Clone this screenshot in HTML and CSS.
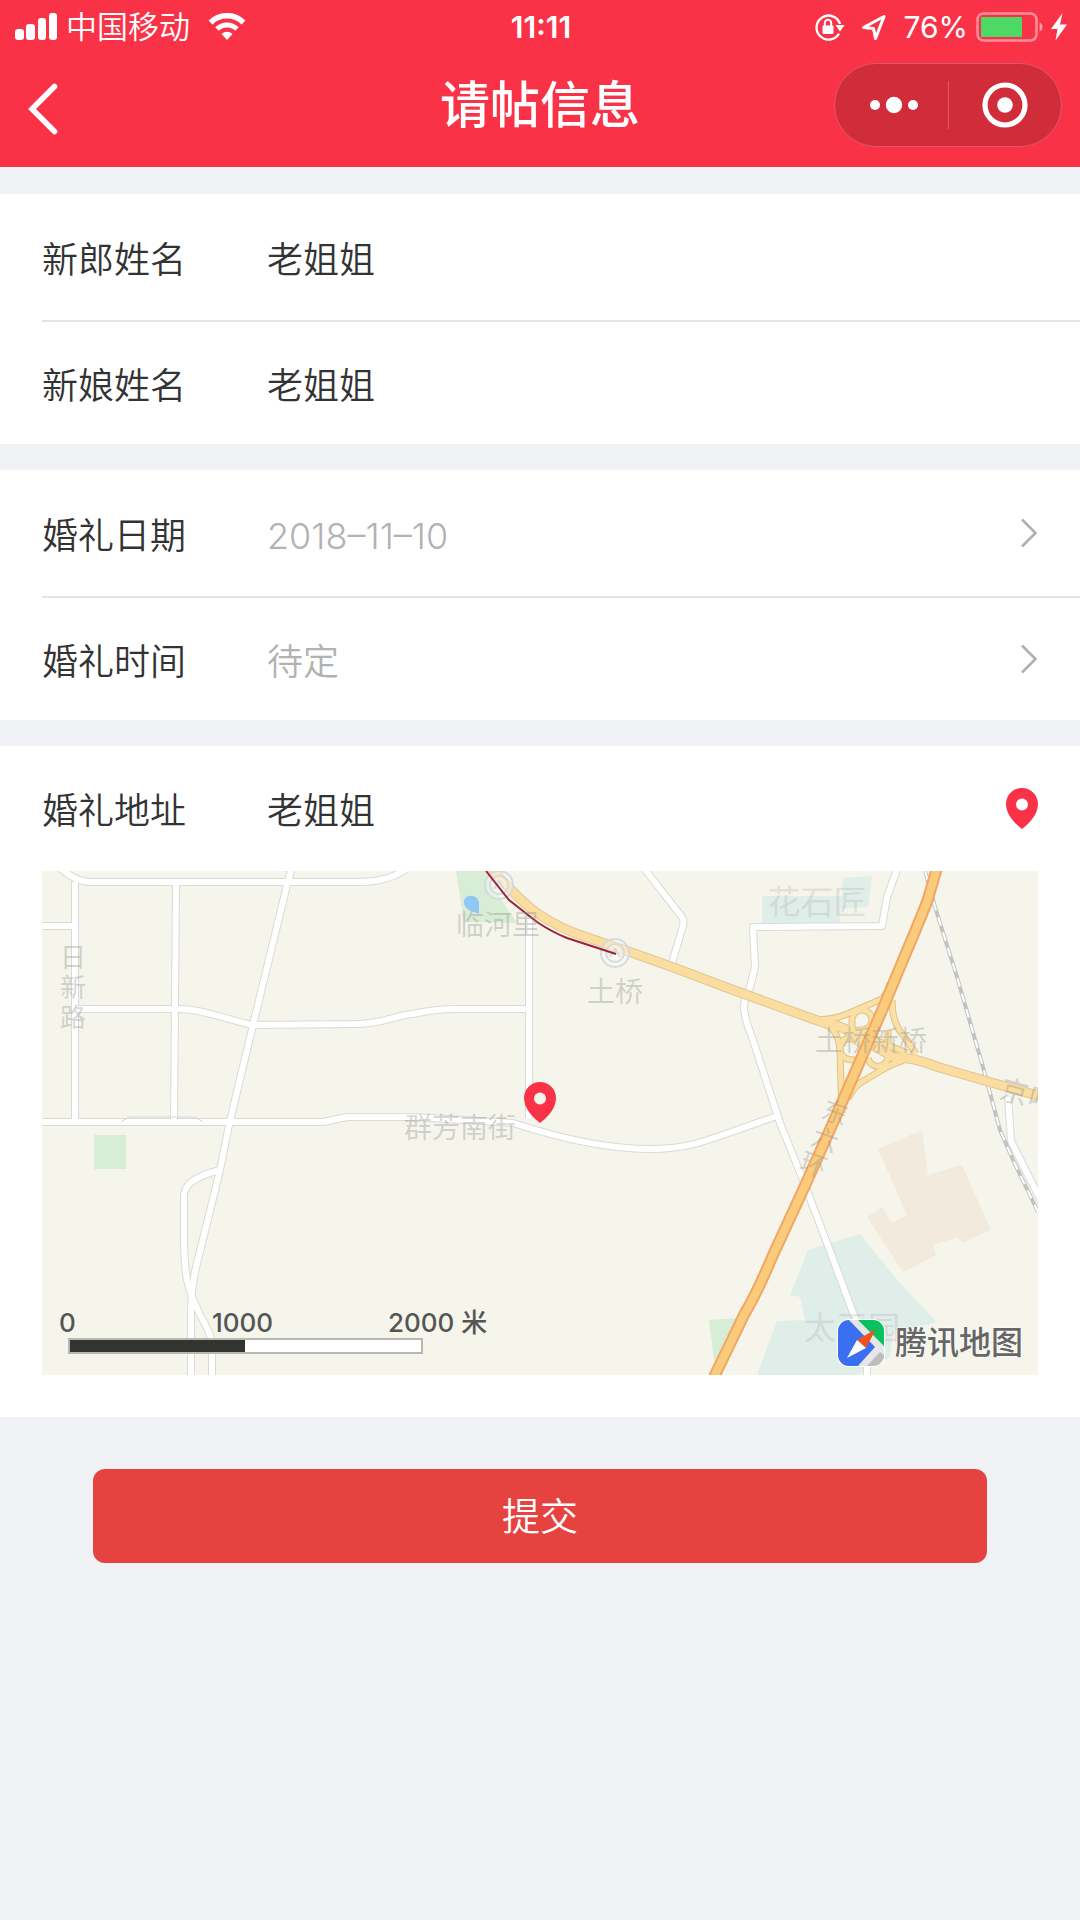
FILE: index.html
```html
<!DOCTYPE html>
<html lang="zh-CN">
<head>
<meta charset="utf-8">
<meta name="viewport" content="width=device-width, initial-scale=1">
<title>请帖信息</title>
<link rel="stylesheet" href="styles.css">
</head>
<body>
<header class="header">
  <div class="status">
    <div class="status-side">
      <svg class="signal" width="43" height="28" viewBox="0 0 43 28" fill="#fff" aria-hidden="true">
        <rect x="0" y="16" width="9" height="11" rx="3"/><rect x="11" y="11" width="9" height="16" rx="3"/>
        <rect x="23" y="5" width="8" height="22" rx="3"/><rect x="34" y="0" width="8" height="27" rx="3"/>
      </svg>
      <span class="carrier">中国移动</span>
      <svg class="wifi" width="38" height="28" viewBox="0 0 38 28" aria-hidden="true">
        <path d="M2.500 9.500a23.500 23.500 0 0 1 33 0" fill="none" stroke="#fff" stroke-width="5.500"/>
        <path d="M9 16a14.500 14.500 0 0 1 20 0" fill="none" stroke="#fff" stroke-width="5"/>
        <path d="M13.500 21a8 8 0 0 1 11 0L19 27z" fill="#fff"/>
      </svg>
    </div>
    <span class="clock">11:11</span>
    <div class="status-side status-right">
      <svg width="30" height="28" viewBox="0 0 30 28" aria-hidden="true">
        <path d="M24 20.500A12 12 0 1 1 25 11" fill="none" stroke="#fff" stroke-width="2.400"/>
        <path d="M20.500 12h9L25 18.500z" fill="#fff"/>
        <rect x="7.500" y="12.500" width="11" height="8.500" rx="1" fill="#fff"/>
        <path d="M9.800 13v-3a3.200 3.200 0 0 1 6.400 0v3" fill="none" stroke="#fff" stroke-width="2"/>
      </svg>
      <svg class="locate" width="26" height="28" viewBox="0 0 26 28" aria-hidden="true">
        <path d="M2.500 14.500L23 3.500 14.500 25.500 12.500 15.500z" fill="none" stroke="#fff" stroke-width="3" stroke-linejoin="round"/>
      </svg>
      <span class="percent">76%</span>
      <svg class="battery" width="68" height="30" viewBox="0 0 68 30" aria-hidden="true">
        <rect x="1.500" y="1.500" width="59" height="27" rx="6" fill="none" stroke="#fff" stroke-opacity=".45" stroke-width="2.500"/>
        <path d="M63.500 10.500c4 1 4 8 0 9z" fill="#fff" fill-opacity=".5"/>
        <rect x="5" y="5" width="41" height="20" rx="1" fill="#4cd964"/>
      </svg>
      <svg class="bolt" width="16" height="28" viewBox="0 0 16 28" fill="#fff" aria-hidden="true"><path d="M11.500 0L0 16h6.500L4.500 27.500 16 11.500H9z"/></svg>
    </div>
  </div>
  <div class="nav">
    <button class="back" type="button" aria-label="返回">
      <svg width="30" height="52" viewBox="0 0 30 52"><path d="M26.500 3.500L4 26 26.500 48.500" fill="none" stroke="#fff" stroke-width="5.500" stroke-linecap="round"/></svg>
    </button>
    <h1 class="title">请帖信息</h1>
    <div class="capsule">
      <button type="button" aria-label="更多">
        <svg width="50" height="18" viewBox="0 0 50 18" fill="#fff"><circle cx="6" cy="9" r="5"/><circle cx="25" cy="9" r="8.200"/><circle cx="44" cy="9" r="5"/></svg>
      </button>
      <button type="button" aria-label="关闭">
        <svg width="46" height="46" viewBox="0 0 46 46"><circle cx="23" cy="23" r="20" fill="none" stroke="#fff" stroke-width="5.200"/><circle cx="23" cy="23" r="7.800" fill="#fff"/></svg>
      </button>
    </div>
  </div>
</header>

<form class="form">
  <section class="group">
    <div class="row"><label for="groom">新郎姓名</label><input id="groom" type="text" value="老姐姐"></div>
    <div class="row"><label for="bride">新娘姓名</label><input id="bride" type="text" value="老姐姐"></div>
  </section>
  <section class="group">
    <div class="row"><label for="date">婚礼日期</label><input class="muted" id="date" type="text" value="2018–11–10" readonly>
      <svg class="chevron" width="18" height="32" viewBox="0 0 18 32"><path d="M2 2.500L15.500 16 2 29.500" fill="none" stroke="#b0b0b0" stroke-width="2.600"/></svg></div>
    <div class="row"><label for="time">婚礼时间</label><input class="muted" id="time" type="text" value="待定" readonly>
      <svg class="chevron" width="18" height="32" viewBox="0 0 18 32"><path d="M2 2.500L15.500 16 2 29.500" fill="none" stroke="#b0b0b0" stroke-width="2.600"/></svg></div>
  </section>
  <section class="group">
    <div class="row"><label for="place">婚礼地址</label><input id="place" type="text" value="老姐姐">
      <button class="pick" type="button" aria-label="选择位置">
        <svg width="32" height="41" viewBox="0 0 32 41"><path fill-rule="evenodd" fill="#fa3247" d="M16 0C7 0 0 7 0 16c0 10 8 19 16 25 8-6 16-15 16-25C32 7 25 0 16 0zm0 10.500a6 6 0 1 1 0 12 6 6 0 0 1 0-12z"/></svg>
      </button></div>
    <div class="map">
      <svg class="map-art" viewBox="42 871 996 504" role="img" aria-label="地图">
        <rect x="42" y="871" width="996" height="504" fill="#f5f5eb"/>
        <path fill="#d7edd5" d="M94 1135h32v34H94zM456 871h28l24 39 9 13-53-1zM709 1320l29-2-22 57z"/>
        <path fill="#8fc8f5" d="M464 900a8 8 0 0 1 15 3v11l-10-4q-6-4-5-10z"/>
        <path fill="#e0eeea" d="M762 896h80l1-18 29-2-4 31-28 2v14h-78zM808 1250l52-16 37 46 40 42-44 11-3 24-33 18H757l20-54 28-1-5-23-10-2z"/>
        <path fill="#f2eadd" d="M878 1149l44-19 6 45 34-10 29 65-29 13-4-6-25 8 3 10-33 17-36-55 15-10 10 16 15-8z"/>

        <defs>
          <g id="streets" fill="none" stroke-linejoin="round">
            <path d="M60 868q16 14 30 14h228c34 0 50 1 62-2q15-3 26-11M75 882v240M42 926h33M176 883l-2 240M291 871l-4 14-34 140-24 100-9 45-14 57-9 36q-6 24-6 50v62"/>
            <path d="M75 1009h105c24 0 50 12 73 16l104-1c30-1 35-8 56-10q22-5 44-5h71M529 918v200"/>
            <path d="M42 1122h281l24-5h66l100 6q80 26 136 26c45 0 60-10 128-33"/>
            <path d="M220 1170q-20 5-30 13-6 6-6 14v40q0 25 3 43 3 14 13 35 11 18 12 30v30M643 867l39 50q3 5 0 12l-10 34"/>
            <path d="M898 867l-11 30-5 29-129 1 2 40-5 20q-6 12-6 20 0 10 8 30l28 86 23 57 24 63 40 107v30M1008 1097l3 44 30 60"/>
          </g>
          <g id="ramps" fill="none" stroke-linejoin="round">
            <path d="M813 1019q18 2 34-5l35-15q6-6 8-16M827 1025q13 8 13 28l2 60M892 1000q0 24 12 36l12 18M915 1057q-14 3-28 10l-27 16q-8 6-12 16M827 1020l80 33"/>
            <path d="M852 1040v-20a10 10 0 1 1 10 10q-12 0-12 8M862 1045q-18-14-22 2 0 14 16 13M868 1058a10 10 0 1 0 20-4v-24"/>
          </g>
          <path id="ring" d="M491 868q30 34 46 45 22 15 46 23l47 16 45 16 50 19 88 32q14 5 30 9l50 29q20 0 45 10l55 16 50 14" fill="none"/>
          <path id="express" d="M937 868l-10 34q-12 30-24 58l-20 48-16 37-34 78-30 67-30 65q-17 40-28 58l-31 64" fill="none"/>
        </defs>
        <use href="#streets" stroke="#dadad8" stroke-width="8"/>
        <use href="#streets" stroke="#fff" stroke-width="6"/>
        <path d="M121 1122l8-5h66l8 5" fill="none" stroke="#d8d8d6"/>
        <path d="M925 871l10 36 22 70 26 90 17 63 13 30 25 52" fill="none" stroke="#c2c2c2" stroke-width="4"/>
        <path d="M925 871l10 36 22 70 26 90 17 63 13 30 25 52" fill="none" stroke="#fff" stroke-width="2" stroke-dasharray="9 7"/>
        <use href="#ramps" stroke="#e0c285" stroke-width="7"/>
        <use href="#ring" stroke="#dfc79a" stroke-width="10"/>
        <use href="#ramps" stroke="#fbe0a5" stroke-width="5"/>
        <use href="#ring" stroke="#fbdd9f" stroke-width="8"/>
        <use href="#express" stroke="#f0a765" stroke-width="12"/>
        <use href="#express" stroke="#fbcb7c" stroke-width="8"/>
        <g fill="#fff" fill-opacity=".3" stroke="#d3dbe0" stroke-width="2">
          <circle cx="499" cy="885" r="14"/><circle cx="499" cy="885" r="9"/>
          <circle cx="615" cy="953" r="14"/><circle cx="615" cy="953" r="9"/>
          <path d="M610 957l5-8 5 8M494 889l5-8 5 8" fill="none"/>
        </g>
        <path d="M486 871l23 29 28 22q15 10 30 16l49 16" fill="none" stroke="#9c2438" stroke-width="2"/>
        <g class="map-label">
          <text x="73" y="967" font-size="26">日</text><text x="73" y="997" font-size="26">新</text><text x="73" y="1027" font-size="26">路</text>
          <text x="498" y="935">临河里</text><text x="615" y="1002">土桥</text>
          <text x="871" y="1051">土桥新桥</text><text x="460" y="1138">群芳南街</text>
          <text class="faint" x="817" y="914" font-size="33">花石匠</text>
          <text class="faint" x="852" y="1339" font-size="32">太玉园</text>
          <text x="835" y="1122" font-size="26" transform="rotate(20 835 1113)">东</text>
          <text x="825" y="1149" font-size="26" transform="rotate(20 825 1140)">六</text>
          <text x="813" y="1174" font-size="26" transform="rotate(20 813 1165)">环</text>
          <text x="1014" y="1102" font-size="28" transform="rotate(15 1014 1093)">京</text>
          <text x="1042" y="1110" font-size="28" transform="rotate(15 1042 1101)">哈</text>
        </g>
      </svg>
      <svg class="marker" width="32" height="41" viewBox="0 0 32 41" aria-hidden="true"><path fill="#fa3247" d="M16 0C7 0 0 7 0 16c0 10 8 19 16 25 8-6 16-15 16-25C32 7 25 0 16 0z"/><circle cx="16" cy="16.500" r="6" fill="#f5f5eb"/></svg>
      <div class="scale">
        <div class="scale-labels"><span>0</span><span>1000</span><span>2000 米</span></div>
        <div class="scale-bar"></div>
      </div>
      <div class="brand">
        <svg width="48" height="48" viewBox="0 0 48 48" aria-hidden="true">
          <defs><clipPath id="tile"><rect x="1" y="1" width="46" height="46" rx="11"/></clipPath></defs>
          <rect width="48" height="48" rx="12" fill="#fff"/>
          <g clip-path="url(#tile)">
            <rect width="48" height="48" fill="#e6e6e6"/>
            <path d="M0 0h11l27 28L20 48H0z" fill="#3a6ff2"/>
            <path d="M20 0h28v28z" fill="#08c160"/>
            <path d="M43 33l6 5v10H29z" fill="#bdbdbd"/>
          </g>
          <path d="M39 10L20 21l9 8z" fill="#f4511e"/><path d="M20 21l9 8L10 39z" fill="#fff"/>
        </svg>
        <span>腾讯地图</span>
      </div>
    </div>
  </section>
  <button class="submit" type="submit">提交</button>
</form>
</body>
</html>
```
FILE: styles.css
```css
* { box-sizing: border-box; }

body {
  margin: 0;
  min-height: 100vh;
  background: #f0f2f6;
  color: #333;
  font-family: Inter, "Noto Sans CJK SC", sans-serif;
}

button, input { font: inherit; color: inherit; }
button { border: 0; padding: 0; background: none; cursor: pointer; }
svg { display: block; flex: none; }

/* Header */
.header {
  background: #fa3247;
  color: #fff;
  padding-bottom: 12px;
}

.status {
  display: grid;
  grid-template-columns: 1fr auto 1fr;
  align-items: center;
  height: 54px;
  padding: 0 13px 0 15px;
  font-size: 30px;
  line-height: 40px;
}

.status-side { display: flex; align-items: center; }
.status-right { justify-content: flex-end; }
.carrier { margin-left: 8px; font-size: 31px; font-weight: 350; }
.wifi { margin-left: 18px; }
.clock { font-size: 30px; font-weight: 600; }
.locate { margin: 0 16px; }
.percent { font-weight: 400; }
.battery { margin-left: 8px; }
.bolt { margin-left: 7px; }

.nav {
  display: grid;
  grid-template-columns: 1fr auto 1fr;
  align-items: center;
  height: 101px;
  padding: 0 18px;
}

.back { justify-self: start; padding: 9px 0 0 10px; }
.title { margin: 0; font-size: 50px; line-height: 64px; font-weight: 500; }

.capsule {
  justify-self: end;
  display: grid;
  grid-template-columns: 1fr 1fr;
  width: 228px;
  height: 84px;
  border: 1px solid #e0566a;
  border-radius: 42px;
  background: #d12c3a;
}

.capsule button { display: grid; place-items: center; position: relative; }
.capsule button:first-child { padding-left: 4px; }
.capsule button + button::before {
  content: "";
  position: absolute;
  left: 0;
  top: 17px;
  bottom: 17px;
  width: 1px;
  background: #e0566a;
}

/* Form */
.form { display: flex; flex-direction: column; gap: 26px; padding-top: 27px; }
.group { background: #fff; padding-left: 42px; }

.row {
  display: flex;
  align-items: center;
  height: 125px;
  padding-right: 42px;
  font-size: 36px;
  line-height: 52px;
  font-weight: 350;
}

.row + .row { height: 122px; }
.row:not(:last-child):has(+ .row) { height: 128px; border-bottom: 2px solid #e5e5e5; }
.row label { flex: none; width: 225px; padding-top: 5px; }
.row input {
  flex: 1;
  min-width: 0;
  border: 0;
  padding: 5px 0 0;
  background: none;
  outline: 0;
}
.row .muted { color: #b2b2b2; }

.map {
  position: relative;
  margin: 0 42px 42px 0;
  overflow: hidden;
}

.map-art { width: 100%; height: auto; }
.map-label { font-size: 28px; text-anchor: middle; fill: #8c8c8c; fill-opacity: .35; }
.faint { fill-opacity: .2; }

.marker { position: absolute; left: calc(50% - 16px); top: calc(50% - 41px); }

.scale { position: absolute; left: 17px; bottom: 21px; }
.scale-labels {
  display: grid;
  grid-template-columns: 153px 176px auto;
  font-size: 26px;
  line-height: 30px;
  font-weight: 500;
  color: #555;
}
.scale-bar {
  width: 355px;
  height: 16px;
  margin-left: 9px;
  border: 2px solid #b8b8b0;
  background: linear-gradient(to right, #32342f 50%, #fff 50%);
}

.brand {
  position: absolute;
  right: 15px;
  bottom: 8px;
  display: flex;
  align-items: center;
  gap: 10px;
  font-size: 32px;
  line-height: 48px;
  font-weight: 500;
  color: #666;
  text-shadow: 0 0 2px #fff, 0 0 2px #fff;
}

.submit {
  margin: 26px 93px;
  height: 94px;
  padding-bottom: 6px;
  border-radius: 12px;
  background: #e64340;
  color: #fff;
  font-size: 38px;
  font-weight: 350;
}
```
